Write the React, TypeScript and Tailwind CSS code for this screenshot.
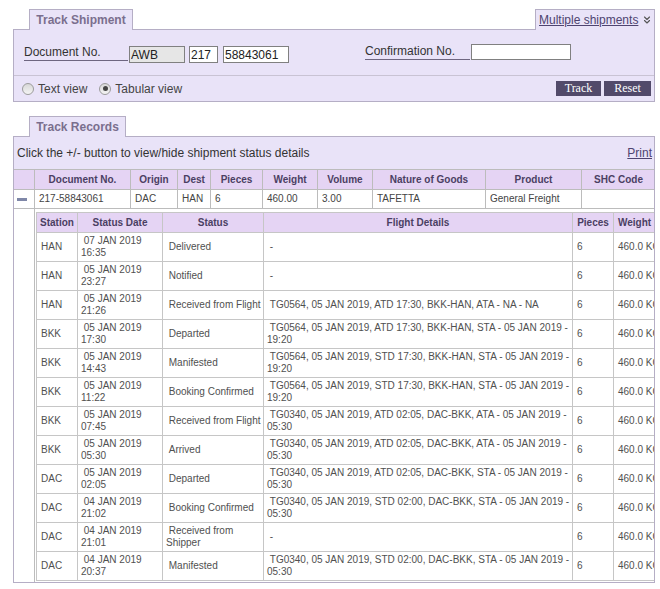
import { ChevronsDown } from "lucide-react"

type Rec = { station: string; date: string; time: string; status: string; flight: string }

const records: Rec[] = [
  { station: "HAN", date: "07 JAN 2019", time: "16:35", status: "Delivered", flight: "-" },
  { station: "HAN", date: "05 JAN 2019", time: "23:27", status: "Notified", flight: "-" },
  { station: "HAN", date: "05 JAN 2019", time: "21:26", status: "Received from Flight", flight: "TG0564, 05 JAN 2019, ATD 17:30, BKK-HAN, ATA - NA - NA" },
  { station: "BKK", date: "05 JAN 2019", time: "17:30", status: "Departed", flight: "TG0564, 05 JAN 2019, ATD 17:30, BKK-HAN, STA - 05 JAN 2019 - 19:20" },
  { station: "BKK", date: "05 JAN 2019", time: "14:43", status: "Manifested", flight: "TG0564, 05 JAN 2019, STD 17:30, BKK-HAN, STA - 05 JAN 2019 - 19:20" },
  { station: "BKK", date: "05 JAN 2019", time: "11:22", status: "Booking Confirmed", flight: "TG0564, 05 JAN 2019, STD 17:30, BKK-HAN, STA - 05 JAN 2019 - 19:20" },
  { station: "BKK", date: "05 JAN 2019", time: "07:45", status: "Received from Flight", flight: "TG0340, 05 JAN 2019, ATD 02:05, DAC-BKK, ATA - 05 JAN 2019 - 05:30" },
  { station: "BKK", date: "05 JAN 2019", time: "05:30", status: "Arrived", flight: "TG0340, 05 JAN 2019, ATD 02:05, DAC-BKK, ATA - 05 JAN 2019 - 05:30" },
  { station: "DAC", date: "05 JAN 2019", time: "02:05", status: "Departed", flight: "TG0340, 05 JAN 2019, ATD 02:05, DAC-BKK, STA - 05 JAN 2019 - 05:30" },
  { station: "DAC", date: "04 JAN 2019", time: "21:02", status: "Booking Confirmed", flight: "TG0340, 05 JAN 2019, STD 02:00, DAC-BKK, STA - 05 JAN 2019 - 05:30" },
  { station: "DAC", date: "04 JAN 2019", time: "21:01", status: "Received from Shipper", flight: "-" },
  { station: "DAC", date: "04 JAN 2019", time: "20:37", status: "Manifested", flight: "TG0340, 05 JAN 2019, STD 02:00, DAC-BKK, STA - 05 JAN 2019 - 05:30" },
]

const mainCols = [
  { label: "", w: "w-[21px]" },
  { label: "Document No.", w: "w-[96px]" },
  { label: "Origin", w: "w-[47px]" },
  { label: "Dest", w: "w-[33px]" },
  { label: "Pieces", w: "w-[52px]" },
  { label: "Weight", w: "w-[55px]" },
  { label: "Volume", w: "w-[55px]" },
  { label: "Nature of Goods", w: "w-[113px]" },
  { label: "Product", w: "w-[96px]" },
  { label: "SHC Code", w: "w-[74px]" },
]

const subCols = [
  { label: "Station", w: "w-[41px]" },
  { label: "Status Date", w: "w-[85px]" },
  { label: "Status", w: "w-[101px]" },
  { label: "Flight Details", w: "w-[309px]" },
  { label: "Pieces", w: "w-[41px]" },
  { label: "Weight", w: "w-[42px]" },
]

function Radio({ checked }: { checked?: boolean }) {
  return (
    <span className="w-[12px] h-[12px] rounded-full border border-[#9c9c9c] bg-gradient-to-b from-[#d8d8d8] to-[#f4f4f4] flex items-center justify-center">
      {checked && <span className="w-[5px] h-[5px] rounded-full bg-[#444]" />}
    </span>
  )
}

export default function App() {
  const cell = "border border-[#bcbcbc]"
  const head = "bg-[#e5d4f4] text-[#4b3f63] font-bold text-center"
  const sub = "border border-[#c6c6c6]"

  return (
    <div className="w-[660px] h-[589px] overflow-hidden bg-white font-['Liberation_Sans',Arial,sans-serif] text-[12px] text-[#333]">
      {/* Track Shipment */}
      <div className="ml-[13px] w-[642px] pt-[9px]">
        <div className="flex items-end justify-between">
          <div className="relative z-10 -mb-px ml-[16px] w-[104px] h-[21px] border border-b-0 border-[#b5aec5] bg-[#e9e3f8] flex items-center justify-center font-bold text-[#7a6f8e] pb-px">
            Track Shipment
          </div>
          <div className="relative z-10 -mb-px w-[120px] h-[21px] border border-b-0 border-[#b5aec5] bg-[#e9e3f8] flex items-center pl-[3px] gap-[3px] pb-px">
            <a className="underline text-[#4e4470] leading-none">Multiple shipments</a>
            <ChevronsDown size={12} strokeWidth={2.2} className="text-[#555]" />
          </div>
        </div>
        <div className="border border-[#b5aec5] bg-[#e9e3f8]">
          <div className="h-[45px] flex items-start pt-[13px] pl-[10px]">
            <div className="w-[104px] h-[18px] leading-[18px] border-b border-[#6e6680]">Document No.</div>
            <input readOnly defaultValue="AWB" className="ml-px mt-[3px] w-[56px] h-[17px] border border-[#808080] bg-[#e6e6e6] px-px text-[12px] text-[#222] outline-none" />
            <input readOnly defaultValue="217" className="ml-[4px] mt-[3px] w-[29px] h-[17px] border border-[#808080] bg-white px-px text-[12px] text-[#222] outline-none" />
            <input readOnly defaultValue="58843061" className="ml-[5px] mt-[3px] w-[66px] h-[17px] border border-[#808080] bg-white px-px text-[12px] text-[#222] outline-none" />
            <div className="ml-[76px] w-[105px] h-[17px] leading-[17px] border-b border-[#6e6680]">Confirmation No.</div>
            <input readOnly className="ml-px mt-px w-[100px] h-[16px] border border-[#808080] bg-white outline-none" />
          </div>
          <div className="h-[26px] border-t border-[#c9c3d4] flex items-center">
            <div className="ml-[8px] flex items-center gap-[4px] text-[#444]">
              <Radio />
              <span>Text view</span>
            </div>
            <div className="ml-[12px] flex items-center gap-[4px] text-[#444]">
              <Radio checked />
              <span>Tabular view</span>
            </div>
            <div className="ml-auto mr-[3px] flex gap-[3px] font-['Liberation_Serif','Times_New_Roman',serif] text-[12px] text-white">
              <button className="w-[45px] h-[15px] bg-[#524a6a] leading-[15px]">Track</button>
              <button className="w-[47px] h-[15px] bg-[#524a6a] leading-[15px]">Reset</button>
            </div>
          </div>
        </div>

        {/* Track Records */}
        <div className="mt-[14px] relative z-10 -mb-px ml-[16px] w-[97px] h-[21px] border border-b-0 border-[#b5aec5] bg-[#e9e3f8] flex items-center justify-center font-bold text-[#7a6f8e] pb-px">
          Track Records
        </div>
        <div className="border border-[#b5aec5] bg-white overflow-hidden h-[447px]">
          <div className="h-[32px] bg-[#e9e3f8] flex items-center justify-between pl-[3px] pr-[2px]">
            <span>Click the +/- button to view/hide shipment status details</span>
            <a className="underline text-[#4e4470]">Print</a>
          </div>
          <table className="-ml-px w-[642px] table-fixed border-collapse text-[10px] leading-[12px] text-[#444]">
            <colgroup>
              {mainCols.map((c, i) => (
                <col key={i} className={c.w} />
              ))}
            </colgroup>
            <thead>
              <tr className="h-[20px]">
                {mainCols.map((c, i) => (
                  <th key={i} className={`${cell} ${head}`}>{c.label}</th>
                ))}
              </tr>
            </thead>
            <tbody>
              <tr className="h-[19px]">
                <td className={`${cell} pl-[3px]`}>
                  <span className="block w-[10px] h-[3px] bg-[#7f87a8]" />
                </td>
                <td className={`${cell} px-[4px]`}>217-58843061</td>
                <td className={`${cell} px-[4px]`}>DAC</td>
                <td className={`${cell} px-[4px]`}>HAN</td>
                <td className={`${cell} px-[4px]`}>6</td>
                <td className={`${cell} px-[4px]`}>460.00</td>
                <td className={`${cell} px-[4px]`}>3.00</td>
                <td className={`${cell} px-[4px]`}>TAFETTA</td>
                <td className={`${cell} px-[4px]`}>General Freight</td>
                <td className={`${cell} px-[4px]`}></td>
              </tr>
              <tr>
                <td className={cell}></td>
                <td colSpan={9} className={`${cell} align-top pt-[3px] pl-[1px] pb-[3px]`}>
                  <table className="w-[619px] table-fixed border-collapse text-[#505050]">
                    <colgroup>
                      {subCols.map((c, i) => (
                        <col key={i} className={c.w} />
                      ))}
                    </colgroup>
                    <thead>
                      <tr className="h-[20px]">
                        {subCols.map((c, i) => (
                          <th key={i} className={`${sub} ${head}`}>{c.label}</th>
                        ))}
                      </tr>
                    </thead>
                    <tbody>
                      {records.map((r, i) => (
                        <tr key={i} className="h-[29px]">
                          <td className={`${sub} px-[4px]`}>{r.station}</td>
                          <td className={`${sub} px-[3px]`}>
                            {"\u00a0" + r.date}
                            <br />
                            {r.time}
                          </td>
                          <td className={`${sub} pl-[3px] pr-0`}>{"\u00a0" + r.status}</td>
                          <td className={`${sub} pl-[3px] pr-0`}>{"\u00a0" + r.flight}</td>
                          <td className={`${sub} px-[4px]`}>6</td>
                          <td className={`${sub} pl-[4px] pr-0 whitespace-nowrap`}>460.0 KG</td>
                        </tr>
                      ))}
                    </tbody>
                  </table>
                </td>
              </tr>
            </tbody>
          </table>
        </div>
      </div>
    </div>
  )
}
